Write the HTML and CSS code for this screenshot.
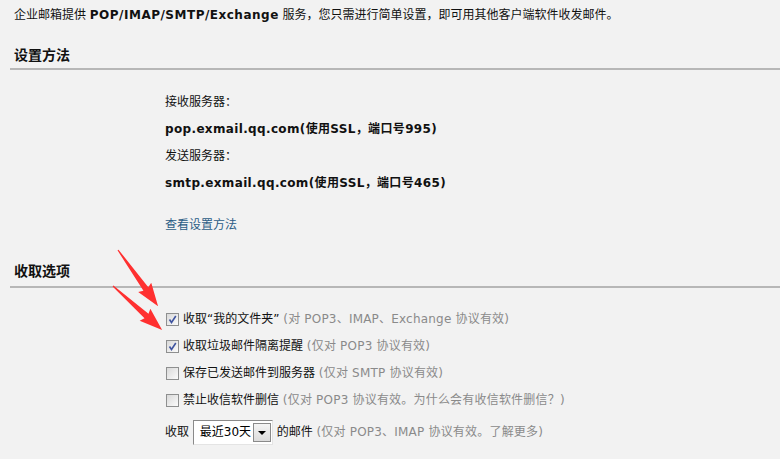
FILE: index.html
```html
<!DOCTYPE html>
<html lang="zh-CN">
<head>
  <meta charset="UTF-8">
  <title>客户端设置</title>
  <link rel="stylesheet" href="styles.css">
</head>
<body>
  <div class="page">
    <p class="intro">企业邮箱提供 <b>POP/IMAP/SMTP/Exchange</b> 服务，您只需进行简单设置，即可用其他客户端软件收发邮件。</p>

    <h2 class="section-title">设置方法</h2>
    <div class="servers">
      <p>接收服务器：</p>
      <p class="host">pop.exmail.qq.com(使用SSL，端口号995)</p>
      <p>发送服务器：</p>
      <p class="host">smtp.exmail.qq.com(使用SSL，端口号465)</p>
      <p class="help"><a href="#">查看设置方法</a></p>
    </div>

    <h2 class="section-title">收取选项</h2>
    <div class="options">
      <label class="opt"><span class="box checked"><svg viewBox="0 0 11 11" width="11" height="11"><path d="M2.5 5.5 L4.5 8.5 L8.8 2" fill="none" stroke="#3f54a0" stroke-width="1.6"/></svg></span>收取“我的文件夹” <span class="note">(对 POP3、IMAP、Exchange 协议有效)</span></label>
      <label class="opt"><span class="box checked"><svg viewBox="0 0 11 11" width="11" height="11"><path d="M2.5 5.5 L4.5 8.5 L8.8 2" fill="none" stroke="#3f54a0" stroke-width="1.6"/></svg></span>收取垃圾邮件隔离提醒 <span class="note">(仅对 POP3 协议有效)</span></label>
      <label class="opt"><span class="box"></span>保存已发送邮件到服务器 <span class="note">(仅对 SMTP 协议有效)</span></label>
      <label class="opt"><span class="box"></span>禁止收信软件删信 <span class="note">(仅对 POP3 协议有效。为什么会有收信软件删信？)</span></label>
      <div class="opt range">收取 <span class="select"><span class="select-value">最近30天</span><span class="select-btn"><svg viewBox="0 0 8 4" width="8" height="4"><path d="M0 0 H8 L4 4 Z" fill="#000"/></svg></span></span> 的邮件 <span class="note">(仅对 POP3、IMAP 协议有效。了解更多)</span></div>
    </div>

    <svg class="arrows" width="780" height="459" viewBox="0 0 780 459">
      <polygon points="0,0.6 48,3 46,8 69,0 46,-8 48,-3 0,-0.6" fill="#ff3030" transform="translate(118 250) rotate(54.5)"/>
      <polygon points="0,0.6 45,3 43,8 66,0 43,-8 45,-3 0,-0.6" fill="#ff3030" transform="translate(113 286) rotate(41.9)"/>
    </svg>
  </div>
</body>
</html>
```

FILE: styles.css
```css
* {
  margin: 0;
  padding: 0;
  box-sizing: border-box;
}

body {
  background-color: #f2f2f2;
  color: #111;
  font-family: "DejaVu Sans", Verdana, "Noto Sans CJK SC", sans-serif;
  font-size: 12px;
}

.page {
  position: relative;
  width: 780px;
  height: 459px;
  overflow: hidden;
}

.intro {
  line-height: 30px;
  padding-left: 14px;
}

.intro b {
  letter-spacing: 0.5px;
}

/* Section headings */
.section-title {
  margin-left: 10px;
  padding: 0 0 3px 4px;
  font-size: 14px;
  line-height: 20px;
  border-bottom: 2px solid #b7b7b7;
  margin-top: 15px;
}

.servers {
  padding: 19px 0 0 165px;
}

.servers p {
  line-height: 27px;
}

.servers .host {
  font-weight: bold;
  letter-spacing: 0.35px;
}

.servers .help {
  margin-top: 15px;
}

.servers a {
  color: #2b5d86;
  text-decoration: none;
}

.servers + .section-title {
  margin-top: 22px;
  padding-bottom: 5px;
}

/* Options list */
.options {
  padding: 18px 0 0 166px;
}

.opt {
  display: flex;
  align-items: center;
  line-height: 27px;
  white-space: pre;
}

.note {
  color: #8a8a8a;
  letter-spacing: 0.2px;
}

.box {
  display: inline-flex;
  align-items: center;
  justify-content: center;
  width: 13px;
  height: 13px;
  margin-right: 4px;
  border: 1px solid #8e8f8f;
  background: linear-gradient(135deg, #d9d9d9, #fbfbfb);
}

.range {
  margin-top: 5px;
  margin-left: -1px;
}

.select {
  display: inline-flex;
  align-items: center;
  height: 25px;
  width: 80px;
  padding: 0 1px 0 6px;
  background: #fff;
  border-top: 1px solid #8a8a8a;
  border-left: 1px solid #8a8a8a;
  border-right: 1px solid #e4e4e4;
  border-bottom: 1px solid #e4e4e4;
  color: #000;
}

.select-value {
  flex-grow: 1;
}

.select-btn {
  display: inline-flex;
  align-items: center;
  justify-content: center;
  width: 18px;
  height: 19px;
  border: 1px solid #8a8a8a;
  background: linear-gradient(#f4f4f4, #dcdcdc);
}

.arrows {
  position: absolute;
  top: 0;
  left: 0;
  pointer-events: none;
}
```
